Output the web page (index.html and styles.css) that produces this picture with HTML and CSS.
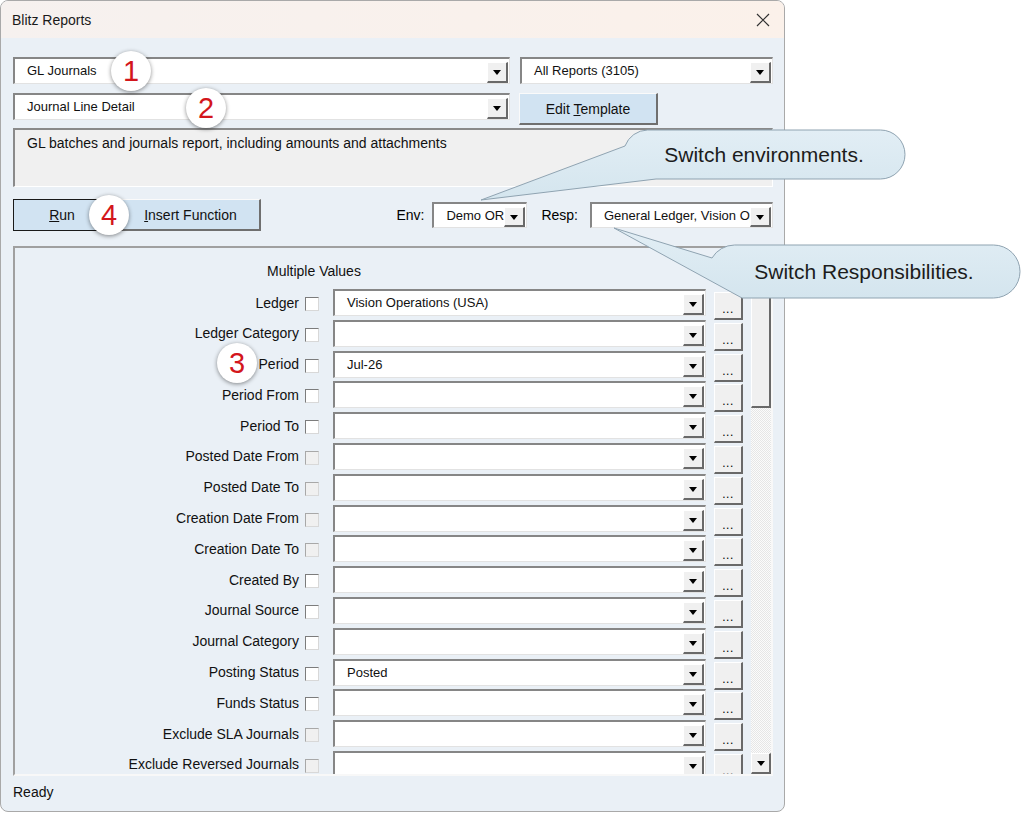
FILE: index.html
```html
<!DOCTYPE html>
<html>
<head>
<meta charset="utf-8">
<link rel="stylesheet" href="styles.css">
</head>
<body>
<div class="page">
  <div class="window">
    <div class="titlebar">
      <span>Blitz Reports</span>
      <svg class="close" width="14" height="14" viewBox="0 0 14 14"><path d="M1 1L13 13M13 1L1 13" stroke="#333" stroke-width="1.2" fill="none"/></svg>
    </div>
    <div class="content">
      <div class="row">
        <div class="combo w-main"><span class="val">GL Journals</span><span class="dd"></span></div>
        <div class="combo w-cat"><span class="val">All Reports (3105)</span><span class="dd"></span></div>
      </div>
      <div class="row row2">
        <div class="combo w-main"><span class="val">Journal Line Detail</span><span class="dd"></span></div>
        <div class="btn btn-edit"><span>Edit <u>T</u>emplate</span></div>
      </div>
      <div class="desc">GL batches and journals report, including amounts and attachments</div>
      <div class="row row3">
        <div class="btn btn-run"><span><u>R</u>un</span></div>
        <div class="btn btn-insert"><span><u>I</u>nsert Function</span></div>
        <div class="envgroup">
          <span class="lbl">Env:</span>
          <div class="combo w-env"><span class="val">Demo OR</span><span class="dd"></span></div>
          <span class="lbl lbl-resp">Resp:</span>
          <div class="combo w-resp"><span class="val">General Ledger, Vision Operations (USA)</span><span class="dd"></span></div>
        </div>
      </div>
      <div class="panel">
        <div class="params">
          <div class="mv-head">Multiple Values</div>
          <div class="grid">
            <div class="plabel">Ledger</div><div class="cb"></div><div class="combo"><span class="val">Vision Operations (USA)</span><span class="dd"></span></div><div class="dots">...</div>
            <div class="plabel">Ledger Category</div><div class="cb"></div><div class="combo"><span class="val"></span><span class="dd"></span></div><div class="dots">...</div>
            <div class="plabel">Period</div><div class="cb"></div><div class="combo"><span class="val">Jul-26</span><span class="dd"></span></div><div class="dots">...</div>
            <div class="plabel">Period From</div><div class="cb"></div><div class="combo"><span class="val"></span><span class="dd"></span></div><div class="dots">...</div>
            <div class="plabel">Period To</div><div class="cb"></div><div class="combo"><span class="val"></span><span class="dd"></span></div><div class="dots">...</div>
            <div class="plabel">Posted Date From</div><div class="cb off"></div><div class="combo"><span class="val"></span><span class="dd"></span></div><div class="dots">...</div>
            <div class="plabel">Posted Date To</div><div class="cb off"></div><div class="combo"><span class="val"></span><span class="dd"></span></div><div class="dots">...</div>
            <div class="plabel">Creation Date From</div><div class="cb off"></div><div class="combo"><span class="val"></span><span class="dd"></span></div><div class="dots">...</div>
            <div class="plabel">Creation Date To</div><div class="cb off"></div><div class="combo"><span class="val"></span><span class="dd"></span></div><div class="dots">...</div>
            <div class="plabel">Created By</div><div class="cb"></div><div class="combo"><span class="val"></span><span class="dd"></span></div><div class="dots">...</div>
            <div class="plabel">Journal Source</div><div class="cb"></div><div class="combo"><span class="val"></span><span class="dd"></span></div><div class="dots">...</div>
            <div class="plabel">Journal Category</div><div class="cb"></div><div class="combo"><span class="val"></span><span class="dd"></span></div><div class="dots">...</div>
            <div class="plabel">Posting Status</div><div class="cb"></div><div class="combo"><span class="val">Posted</span><span class="dd"></span></div><div class="dots">...</div>
            <div class="plabel">Funds Status</div><div class="cb"></div><div class="combo"><span class="val"></span><span class="dd"></span></div><div class="dots">...</div>
            <div class="plabel">Exclude SLA Journals</div><div class="cb off"></div><div class="combo"><span class="val"></span><span class="dd"></span></div><div class="dots">...</div>
            <div class="plabel">Exclude Reversed Journals</div><div class="cb off"></div><div class="combo"><span class="val"></span><span class="dd"></span></div><div class="dots">...</div>
          </div>
        </div>
        <div class="scroll">
          <div class="sbtn up"></div>
          <div class="thumb"></div>
          <div class="track"></div>
          <div class="sbtn down"></div>
        </div>
      </div>
      <div class="status">Ready</div>
    </div>
  </div>

  <svg class="callouts" width="1023" height="813" viewBox="0 0 1023 813">
    <defs>
      <linearGradient id="cg" x1="0" y1="0" x2="0" y2="1">
        <stop offset="0" stop-color="#e2eef5"/>
        <stop offset="1" stop-color="#d4e5ee"/>
      </linearGradient>
    </defs>
    <path d="M647.5 130 H880.5 A24.5 24.5 0 0 1 880.5 179 H656 L481 200 L625 146 A24.5 24.5 0 0 1 647.5 130 Z" fill="url(#cg)" stroke="#8fa3b1" stroke-width="1"/>
    <path d="M734.5 245 H993.5 A26.5 26.5 0 0 1 993.5 298 H742 L614 228 L712 258 A26.5 26.5 0 0 1 734.5 245 Z" fill="url(#cg)" stroke="#8fa3b1" stroke-width="1"/>
  </svg>
  <div class="ctext c1">Switch environments.</div>
  <div class="ctext c2">Switch Responsibilities.</div>

  <div class="badge b1">1</div>
  <div class="badge b2">2</div>
  <div class="badge b3">3</div>
  <div class="badge b4">4</div>
</div>
</body>
</html>
```

FILE: styles.css
```css
* { box-sizing: border-box; }
body {
  margin: 0;
  background: #fff;
  font-family: "Liberation Sans", Arial, sans-serif;
  color: #000;
}
.page {
  position: relative;
  width: 1023px;
  height: 813px;
  overflow: hidden;
}
.window {
  width: 785px;
  height: 812px;
  border: 1px solid #a9a9a9;
  border-radius: 8px;
  background: #eaf0f6;
  display: flex;
  flex-direction: column;
  overflow: hidden;
}
.titlebar {
  height: 37px;
  flex: none;
  background: linear-gradient(90deg, #f6f1ef, #fbf1ea);
  display: flex;
  align-items: center;
  justify-content: space-between;
  padding: 0 14px 0 11px;
  font-size: 14px;
  color: #1a1a1a;
}
.content {
  flex: 1;
  display: flex;
  flex-direction: column;
  padding: 19px 11px 0 12px;
}
.row { display: flex; align-items: flex-start; }
.row2 { margin-top: 9px; }
.row3 { margin-top: 12px; align-items: center; }

.combo {
  display: flex;
  height: 27px;
  background: #fff;
  border-top: 2px solid #868686;
  border-left: 2px solid #868686;
  border-bottom: 1px solid #e2e2e2;
  border-right: 1px solid #e2e2e2;
  font-size: 13px;
  color: #111;
}
.combo .val {
  flex: 1;
  min-width: 0;
  padding-left: 12px;
  line-height: 23px;
  white-space: nowrap;
  overflow: hidden;
}
.combo .dd {
  flex: none;
  width: 21px;
  margin: 3px 1px 0 0;
  background: #f0f0f0;
  border-top: 1px solid #fff;
  border-left: 1px solid #fff;
  border-right: 2px solid #696969;
  border-bottom: 2px solid #696969;
  display: flex;
  align-items: center;
  justify-content: center;
}
.combo .dd::after {
  content: "";
  border-left: 4px solid transparent;
  border-right: 4px solid transparent;
  border-top: 5px solid #000;
  margin-top: 1px;
}
.w-main { width: 497px; }
.w-cat { width: 253px; margin-left: 10px; }
.w-env { width: 95px; height: 26px; }
.w-resp { width: 183px; height: 26px; }

.btn {
  height: 32px;
  background: #d1e3f2;
  border-top: 1px solid #fafafa;
  border-left: 1px solid #fafafa;
  border-right: 2px solid #6f6f6f;
  border-bottom: 2px solid #6f6f6f;
  font-size: 14px;
  display: flex;
  align-items: center;
  justify-content: center;
  color: #111;
}
.btn-edit { width: 139px; margin-left: 9px; }
.btn-run {
  width: 98px;
  border: 1px solid #1a1a1a;
}
.btn-insert { width: 150px; padding-left: 10px; }
.envgroup {
  margin-left: auto;
  display: flex;
  align-items: center;
  font-size: 14px;
}
.lbl { margin-right: 8px; }
.lbl-resp { margin-left: 14px; margin-right: 12px; }

.desc {
  margin-top: 3px;
  height: 59px;
  background: #f0f0f0;
  border-top: 2px solid #8a8a8a;
  border-left: 2px solid #8a8a8a;
  border-bottom: 1px solid #fff;
  border-right: 1px solid #fff;
  font-size: 14px;
  padding: 5px 0 0 12px;
  color: #111;
}

.panel {
  margin-top: 15px;
  height: 530px;
  flex: none;
  display: flex;
  border-top: 2px solid #a0a0a0;
  border-left: 2px solid #a0a0a0;
  border-right: 2px solid #f8f8f8;
  border-bottom: 2px solid #f8f8f8;
}
.params {
  flex: 1;
  overflow: hidden;
  padding-top: 14px;
}
.mv-head {
  font-size: 14px;
  line-height: 18px;
  padding-left: 252px;
  margin-bottom: 9px;
  color: #111;
}
.grid {
  display: grid;
  grid-template-columns: 290px 28px 381px 29px;
  grid-auto-rows: 27px;
  row-gap: 3.8px;
}
.plabel {
  font-size: 14px;
  text-align: right;
  padding-right: 6px;
  align-self: center;
  white-space: nowrap;
  color: #111;
}
.cb {
  width: 14px;
  height: 14px;
  align-self: center;
  margin-top: 3px;
  background: #fff;
  border-top: 1px solid #7c7c7c;
  border-left: 1px solid #7c7c7c;
  border-right: 1px solid #d8d8d8;
  border-bottom: 1px solid #d8d8d8;
}
.cb.off {
  background: #f0f0f0;
  border-top-color: #a8a8a8;
  border-left-color: #a8a8a8;
}
.grid .combo { width: 373px; }
.dots {
  height: 28px;
  margin-top: 3px;
  background: #f0f0f0;
  border-top: 1px solid #fff;
  border-left: 1px solid #fff;
  border-right: 2px solid #696969;
  border-bottom: 2px solid #696969;
  font-size: 12px;
  text-align: center;
  line-height: 12px;
  padding-top: 10px;
  letter-spacing: 0.5px;
  color: #000;
}

.scroll {
  flex: none;
  width: 20px;
  margin-left: 8px;
  display: flex;
  flex-direction: column;
  background: repeating-conic-gradient(#e6e6e6 0 25%, #fbfbfb 0 50%) 0 0 / 2px 2px;
}
.sbtn, .thumb {
  background: #f0f0f0;
  border-top: 1px solid #fff;
  border-left: 1px solid #fff;
  border-right: 2px solid #696969;
  border-bottom: 2px solid #696969;
}
.sbtn {
  height: 21px;
  display: flex;
  align-items: center;
  justify-content: center;
}
.sbtn.down::after {
  content: "";
  border-left: 4px solid transparent;
  border-right: 4px solid transparent;
  border-top: 5px solid #000;
}
.sbtn.up::after {
  content: "";
  border-left: 4px solid transparent;
  border-right: 4px solid transparent;
  border-bottom: 5px solid #000;
}
.thumb { height: 139px; }
.track { flex: 1; }

.status {
  font-size: 14px;
  padding-top: 8px;
  color: #111;
}

.callouts {
  position: absolute;
  left: 0;
  top: 0;
  pointer-events: none;
}
.ctext {
  position: absolute;
  display: flex;
  align-items: center;
  justify-content: center;
  font-size: 21px;
  color: #1c1c1c;
  white-space: nowrap;
}
.c1 { left: 623px; top: 130px; width: 282px; height: 49px; }
.c2 { left: 708px; top: 245px; width: 312px; height: 53px; }

.badge {
  position: absolute;
  width: 40px;
  height: 40px;
  border-radius: 50%;
  background: #fff;
  box-shadow: 0 1px 4px rgba(0, 0, 0, 0.45);
  color: #d3161c;
  font-size: 29px;
  display: flex;
  align-items: center;
  justify-content: center;
}
.b1 { left: 111px; top: 51px; }
.b2 { left: 186px; top: 88px; }
.b3 { left: 217px; top: 343px; }
.b4 { left: 89px; top: 195px; }
```
